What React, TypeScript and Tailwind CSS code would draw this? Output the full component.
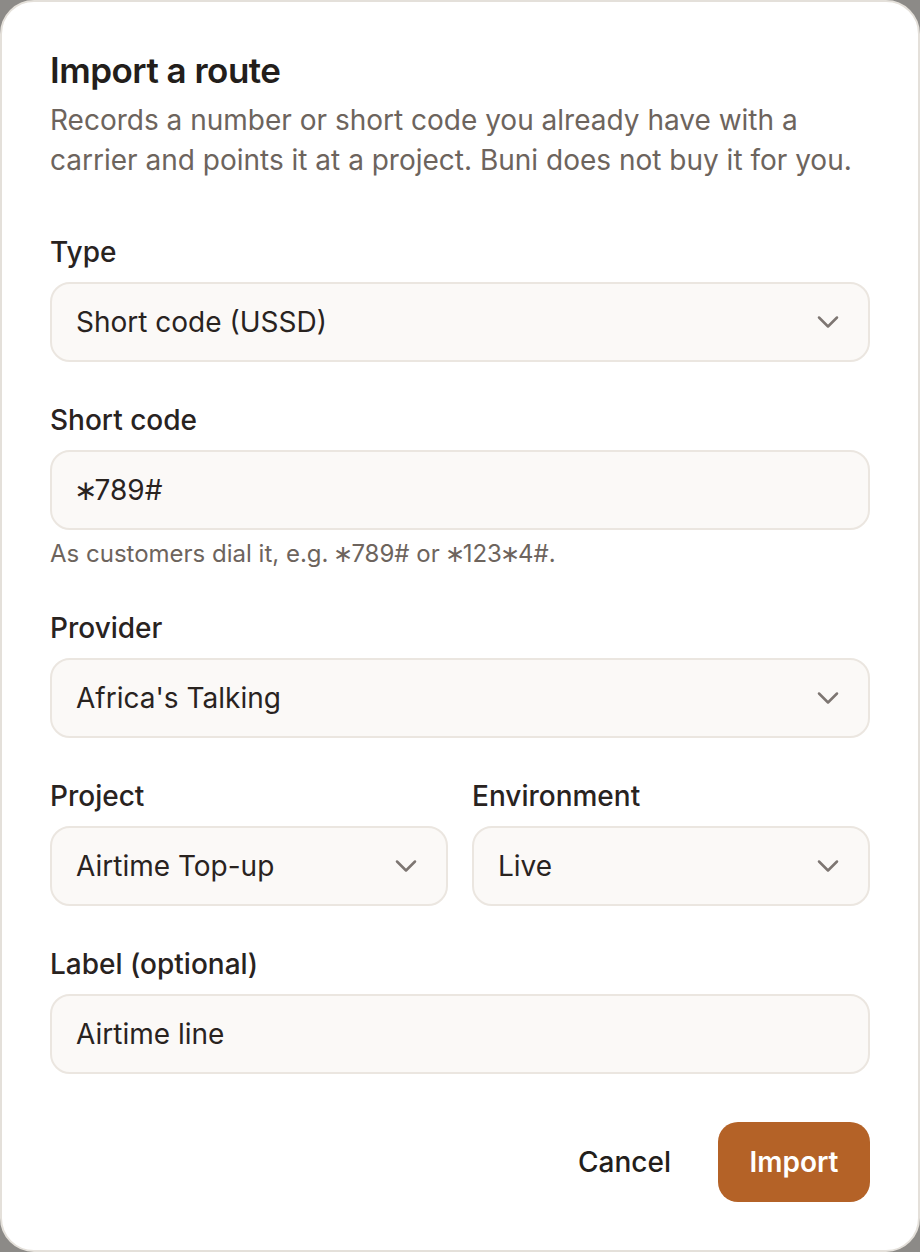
import { ChevronDown } from "lucide-react";

const inter = { fontFamily: "Inter, 'Noto Sans', sans-serif" };

// centred asterisk, as customers see it on a keypad
function Star() {
  return <span className="mx-[-0.08em]">∗</span>;
}

function Label({ children }: { children: React.ReactNode }) {
  return (
    <label className="mb-[10px] block text-[28px] leading-10 font-medium text-[#29231f]">
      {children}
    </label>
  );
}

function Select({ value }: { value: string }) {
  return (
    <div className="flex h-20 w-full items-center justify-between rounded-[20px] border-2 border-[#ebe6e0] bg-[#fbf9f7] pl-6 pr-[22px]">
      <span className="text-[28px] text-[#29231f]">{value}</span>
      <ChevronDown className="h-9 w-9 text-[#7d7672]" strokeWidth={1.7} />
    </div>
  );
}

function Input({ children }: { children: React.ReactNode }) {
  return (
    <div className="flex h-20 w-full items-center rounded-[20px] border-2 border-[#ebe6e0] bg-[#fbf9f7] px-6">
      <span className="text-[28px] text-[#29231f]">{children}</span>
    </div>
  );
}

export default function App() {
  return (
    <div className="h-[1252px] w-[920px] bg-[#8c8a87]" style={inter}>
      {/* Dialog */}
      <div className="flex h-full w-full flex-col rounded-[34px] border-2 border-[#e4e0da] bg-white p-12">
        {/* Header */}
        <h2 className="text-[35px] leading-10 font-semibold tracking-[-0.5px] text-[#231e1b]">
          Import a route
        </h2>
        <p className="mt-[10px] text-[28px] leading-10 text-[#6d645d]">
          Records a number or short code you already have with a carrier and
          points it at a project. Buni does not buy it for you.
        </p>

        {/* Form */}
        <div className="mt-[52px] flex flex-col gap-[38px]">
          <div>
            <Label>Type</Label>
            <Select value="Short code (USSD)" />
          </div>

          <div>
            <Label>Short code</Label>
            <Input>
              <Star />
              789#
            </Input>
            <p className="mt-2 text-[24px] leading-8 text-[#6d645d]">
              As customers dial it, e.g. <Star />
              789# or <Star />
              123
              <Star />
              4#.
            </p>
          </div>

          <div>
            <Label>Provider</Label>
            <Select value="Africa's Talking" />
          </div>

          <div className="grid grid-cols-2 gap-6">
            <div>
              <Label>Project</Label>
              <Select value="Airtime Top-up" />
            </div>
            <div>
              <Label>Environment</Label>
              <Select value="Live" />
            </div>
          </div>

          <div>
            <Label>Label (optional)</Label>
            <Input>Airtime line</Input>
          </div>
        </div>

        {/* Footer */}
        <div className="mt-auto flex items-center justify-end gap-[15px]">
          <button className="h-20 rounded-[20px] px-8 text-[28px] font-medium text-[#231e1b]">
            Cancel
          </button>
          <button className="h-20 w-[152px] rounded-[20px] bg-[#b46227] text-[28px] font-semibold text-white">
            Import
          </button>
        </div>
      </div>
    </div>
  );
}
